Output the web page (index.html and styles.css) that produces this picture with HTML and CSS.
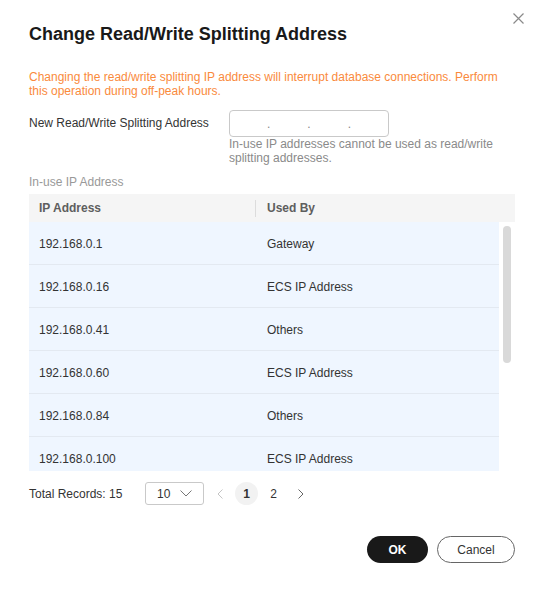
FILE: index.html
```html
<!DOCTYPE html>
<html lang="en">
<head>
  <meta charset="UTF-8" />
  <title>Change Read/Write Splitting Address</title>
  <link rel="stylesheet" href="styles.css">
</head>
<body>

  <div class="dialog">
    <button class="close-btn" title="Close">
      <svg width="11" height="11" viewBox="0 0 11 11"><path d="M0.5 0.5 L10.5 10.5 M10.5 0.5 L0.5 10.5" stroke="#8a8a8a" stroke-width="1.2" fill="none"/></svg>
    </button>

    <h1 class="dialog-title">Change Read/Write Splitting Address</h1>

    <p class="warning">
      Changing the read/write splitting IP address will interrupt database connections. Perform this operation during off-peak hours.
    </p>

    <div class="form-row">
      <label class="form-label">New Read/Write Splitting Address</label>
      <div class="form-field">
        <div class="ip-input">
          <span class="ip-seg"></span><span class="ip-dot">.</span>
          <span class="ip-seg"></span><span class="ip-dot">.</span>
          <span class="ip-seg"></span><span class="ip-dot">.</span>
          <span class="ip-seg"></span>
        </div>
        <div class="form-help">In-use IP addresses cannot be used as read/write splitting addresses.</div>
      </div>
    </div>

    <div class="section-label">In-use IP Address</div>

    <div class="ip-table">
      <div class="table-head">
        <div class="th th-ip">IP Address</div>
        <div class="th-sep"></div>
        <div class="th">Used By</div>
      </div>
      <div class="table-body">
        <div class="rows">
          <div class="row"><div class="td td-ip">192.168.0.1</div><div class="td">Gateway</div></div>
          <div class="row"><div class="td td-ip">192.168.0.16</div><div class="td">ECS IP Address</div></div>
          <div class="row"><div class="td td-ip">192.168.0.41</div><div class="td">Others</div></div>
          <div class="row"><div class="td td-ip">192.168.0.60</div><div class="td">ECS IP Address</div></div>
          <div class="row"><div class="td td-ip">192.168.0.84</div><div class="td">Others</div></div>
          <div class="row"><div class="td td-ip">192.168.0.100</div><div class="td">ECS IP Address</div></div>
        </div>
        <div class="scroll-track"><div class="scroll-thumb"></div></div>
      </div>
    </div>

    <div class="pagination">
      <span class="total">Total Records: 15</span>
      <div class="page-size">
        <span>10</span>
        <svg width="12" height="7" viewBox="0 0 12 7"><path d="M0.5 0.5 L6 6 L11.5 0.5" stroke="#777" stroke-width="1" fill="none"/></svg>
      </div>
      <div class="pager">
        <span class="page-item disabled">
          <svg width="6" height="10" viewBox="0 0 6 10"><path d="M5.5 0.5 L1 5 L5.5 9.5" stroke="#c4c4c4" stroke-width="1" fill="none"/></svg>
        </span>
        <span class="page-item current">1</span>
        <span class="page-item">2</span>
        <span class="page-item">
          <svg width="6" height="10" viewBox="0 0 6 10"><path d="M0.5 0.5 L5 5 L0.5 9.5" stroke="#666" stroke-width="1" fill="none"/></svg>
        </span>
      </div>
    </div>

    <div class="dialog-footer">
      <button class="btn btn-primary">OK</button>
      <button class="btn btn-default">Cancel</button>
    </div>
  </div>

</body>
</html>
```

FILE: styles.css
```css
body {
  margin: 0;
  background: #fff;
  font-family: 'Liberation Sans', Arial, sans-serif;
  font-size: 12px;
  color: #333;
}

.dialog {
  position: relative;
  width: 538px;
  height: 589px;
  box-sizing: border-box;
  padding: 22px 23px 0 29px;
}

.close-btn {
  position: absolute;
  top: 13px;
  right: 14px;
  padding: 0;
  border: none;
  background: none;
  cursor: pointer;
  line-height: 0;
}

.dialog-title {
  margin: 0;
  font-size: 18px;
  line-height: 24px;
  font-weight: bold;
  color: #191919;
}

.warning {
  margin: 24px 0 0;
  line-height: 14px;
  color: #fa8a3c;
}

.form-row {
  display: flex;
  margin-top: 12px;
}

.form-label {
  width: 200px;
  flex-shrink: 0;
  line-height: 27px;
  color: #333;
}

.form-field {
  width: 270px;
}

.ip-input {
  display: flex;
  align-items: center;
  width: 160px;
  height: 27px;
  box-sizing: border-box;
  border: 1px solid #c9c9c9;
  border-radius: 4px;
}

.ip-seg {
  flex: 1;
}

.ip-dot {
  color: #888;
  line-height: 14px;
}

.form-help {
  margin-top: 1px;
  line-height: 13.5px;
  color: #8a8a8a;
}

.section-label {
  margin-top: 10px;
  line-height: 14px;
  color: #999;
}

.ip-table {
  margin-top: 5px;
}

.table-head {
  display: flex;
  align-items: center;
  height: 28px;
  background: #f5f5f5;
}

.th {
  font-weight: bold;
  color: #5e5e5e;
  padding-left: 11px;
}

.th-ip {
  width: 216px;
  padding-left: 10px;
}

.th-sep {
  width: 1px;
  height: 17px;
  background: #dcdcdc;
}

.table-body {
  display: flex;
  height: 249px;
  overflow: hidden;
}

.rows {
  width: 470px;
}

.row {
  display: flex;
  align-items: center;
  height: 43px;
  box-sizing: border-box;
  padding-top: 1px;
  background: #eff6ff;
  border-bottom: 1px solid #e3e9f1;
}

.td {
  padding-left: 10px;
  color: #333;
}

.td-ip {
  width: 218px;
}

.scroll-track {
  width: 16px;
}

.scroll-thumb {
  width: 8px;
  height: 137px;
  margin: 4px 0 0 4px;
  border-radius: 4px;
  background: #d9d9d9;
}

.pagination {
  display: flex;
  align-items: center;
  margin-top: 11px;
}

.total {
  width: 116px;
  color: #333;
}

.page-size {
  display: flex;
  align-items: center;
  justify-content: space-between;
  width: 59px;
  height: 23px;
  box-sizing: border-box;
  padding: 0 11px;
  border: 1px solid #c9c9c9;
  border-radius: 3px;
  color: #333;
}

.pager {
  display: flex;
  gap: 4px;
  margin-left: 4px;
}

.page-item {
  display: flex;
  align-items: center;
  justify-content: center;
  width: 23px;
  height: 23px;
  border-radius: 50%;
  color: #333;
}

.page-item.current {
  background: #f2f2f2;
  font-weight: bold;
}

.dialog-footer {
  display: flex;
  justify-content: flex-end;
  gap: 9px;
  margin-top: 31px;
}

.btn {
  height: 27px;
  border-radius: 14px;
  font-family: inherit;
  font-size: 12px;
  cursor: pointer;
}

.btn-primary {
  width: 61px;
  border: none;
  background: #191919;
  color: #fff;
  font-weight: bold;
}

.btn-default {
  width: 78px;
  border: 1px solid #666;
  background: #fff;
  color: #333;
}
```
